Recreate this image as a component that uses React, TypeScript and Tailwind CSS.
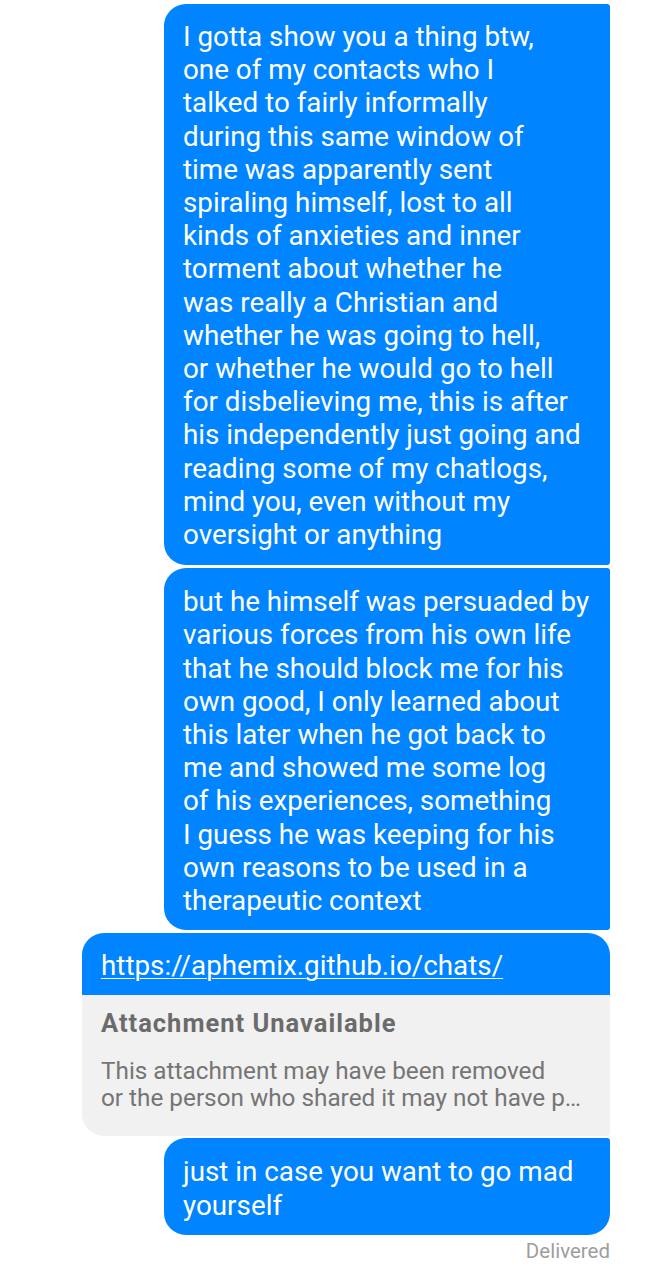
const first = [
  "I gotta show you a thing btw,",
  "one of my contacts who I",
  "talked to fairly informally",
  "during this same window of",
  "time was apparently sent",
  "spiraling himself, lost to all",
  "kinds of anxieties and inner",
  "torment about whether he",
  "was really a Christian and",
  "whether he was going to hell,",
  "or whether he would go to hell",
  "for disbelieving me, this is after",
  "his independently just going and",
  "reading some of my chatlogs,",
  "mind you, even without my",
  "oversight or anything",
]

const second = [
  "but he himself was persuaded by",
  "various forces from his own life",
  "that he should block me for his",
  "own good, I only learned about",
  "this later when he got back to",
  "me and showed me some log",
  "of his experiences, something",
  "I guess he was keeping for his",
  "own reasons to be used in a",
  "therapeutic context",
]

const last = ["just in case you want to go mad", "yourself"]

function Lines({ lines }: { lines: string[] }) {
  return (
    <>
      {lines.map((l, i) => (
        <div key={i} className="whitespace-nowrap">
          {l}
        </div>
      ))}
    </>
  )
}

export default function App() {
  return (
    <div
      className="flex min-h-screen w-full flex-col items-end bg-white pr-[38px] pt-[4px]"
      style={{ fontFamily: "Roboto, 'Noto Sans', sans-serif" }}
    >
      {/* First message */}
      <div className="w-[446px] rounded-l-[22px] rounded-r-[3px] bg-[#0084ff] px-[19px] pt-[16px] pb-[14px] text-[27.8px] leading-[33.2px] text-white">
        <Lines lines={first} />
      </div>

      {/* Second message */}
      <div className="mt-[3px] w-[446px] rounded-l-[22px] rounded-r-[3px] bg-[#0084ff] px-[19px] pt-[17px] pb-[13px] text-[27.8px] leading-[33.2px] text-white">
        <Lines lines={second} />
      </div>

      {/* Link with unavailable attachment */}
      <div className="mt-[3px] w-[528px] overflow-hidden rounded-tl-[22px] rounded-tr-[22px] rounded-bl-[22px] rounded-br-[3px]">
        <div className="bg-[#0084ff] px-[19px] pt-[16px] pb-[13px] text-[27.8px] leading-[33.2px] text-white">
          <span className="underline decoration-1 underline-offset-[3px]">https://aphemix.github.io/chats/</span>
        </div>
        <div className="bg-[#f1f1f1] px-[19px] pt-[13px] pb-[25px]">
          <div className="text-[25.5px] leading-[30px] font-bold tracking-[1px] text-[#6b6b6b]">Attachment Unavailable</div>
          <div className="mt-[19px] text-[24.3px] leading-[27px] text-[#757575]">
            <div className="whitespace-nowrap">This attachment may have been removed</div>
            <div className="whitespace-nowrap">or the person who shared it may not have p…</div>
          </div>
        </div>
      </div>

      {/* Last message */}
      <div className="mt-[2px] w-[446px] rounded-tl-[22px] rounded-tr-[3px] rounded-b-[22px] bg-[#0084ff] px-[19px] pt-[17px] pb-[13px] text-[27.8px] leading-[33.2px] text-white">
        <Lines lines={last} />
      </div>

      <div className="mt-[4px] text-[20.5px] leading-[24px] text-[#9e9e9e]">Delivered</div>
    </div>
  )
}
